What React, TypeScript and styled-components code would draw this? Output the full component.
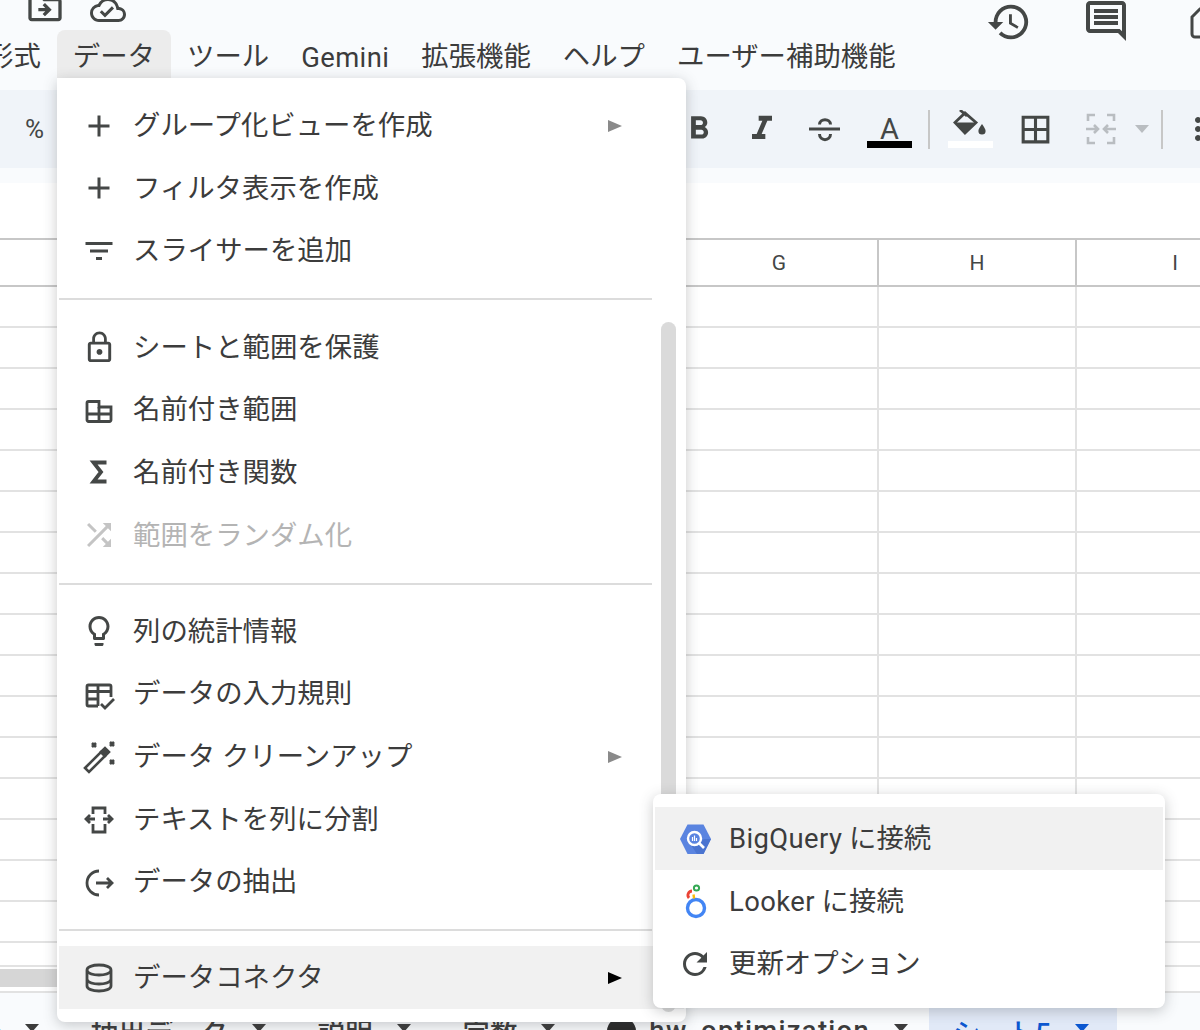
import React from "react"
import styled, { createGlobalStyle } from "styled-components"
import {
  MdAdd,
  MdBorderAll,
  MdFilterList,
  MdFormatBold,
  MdFormatItalic,
  MdHistory,
  MdLockOutline,
  MdMoreVert,
  MdOutlineCloudDone,
  MdOutlineComment,
  MdOutlineDriveFileMove,
  MdOutlineLightbulb,
  MdRefresh,
  MdShuffle,
} from "react-icons/md"

const GlobalStyle = createGlobalStyle`
  html, body {
    margin: 0;
    background: #ffffff;
  }
  * {
    box-sizing: border-box;
  }
`

const Page = styled.div`
  position: relative;
  width: 1200px;
  height: 1030px;
  overflow: hidden;
  background: #f9fbfd;
  color: #3c3c3c;
  font-family: Roboto, "Noto Sans CJK JP", sans-serif;
  font-size: 27.4px;
`

const Header = styled.header`
  display: flex;
  justify-content: space-between;
  height: 90px;
`
const HeaderLeft = styled.div`
  display: flex;
  flex-direction: column;
`
const IconRow = styled.div`
  display: flex;
  align-items: flex-end;
  gap: 25px;
  height: 30px;
  padding: 0 0 2px 25px;
  color: #444746;
`
const Actions = styled.div`
  display: flex;
  align-items: flex-start;
  gap: 50px;
  margin-right: -30px;
  color: #444746;
`
const ActionIcon = styled.span<{ $top: number; $left?: number }>`
  display: flex;
  margin-top: ${(p) => p.$top}px;
  margin-left: ${(p) => p.$left ?? 0}px;
`
const MenuBar = styled.nav`
  display: flex;
  height: 48px;
  margin-left: -30px;
`
const MenuTab = styled.div<{ $open?: boolean }>`
  display: flex;
  align-items: center;
  padding: 0 16px;
  white-space: nowrap;
  border-radius: 8px 8px 0 0;
  background: ${(p) => (p.$open ? "#ececec" : "transparent")};
`
const Latin = styled.span`
  letter-spacing: 0.4px;
`
const TabLatin = styled.span`
  letter-spacing: 1.3px;
`
const GeminiLabel = styled(Latin)`
  margin-top: 8px;
`

const Toolbar = styled.div`
  display: flex;
  align-items: center;
  justify-content: space-between;
  height: 78px;
  background: #f0f4f9;
  color: #444746;
`
const Percent = styled.span`
  padding-left: 25px;
  font-size: 26px;
`
const ToolGroup = styled.div`
  display: flex;
  align-items: center;
  margin-right: -33px;
`
const ToolButton = styled.span<{ $w: number }>`
  display: flex;
  justify-content: center;
  align-items: center;
  width: ${(p) => p.$w}px;
  height: 44px;
`
const ColorTool = styled.span<{ $w: number }>`
  display: flex;
  flex-direction: column;
  align-items: center;
  justify-content: flex-end;
  width: ${(p) => p.$w}px;
  height: 44px;
  padding-bottom: 3px;
`
const ColorGlyph = styled.span`
  display: flex;
  justify-content: center;
  align-items: flex-end;
  height: 30px;
`
const ColorLetter = styled.span`
  display: block;
  height: 30px;
  font-size: 29px;
  line-height: 38px;
`
const ColorBar = styled.span<{ $color: string }>`
  display: block;
  width: 45px;
  height: 7px;
  margin-top: 1px;
  background: ${(p) => p.$color};
`
const ToolDivider = styled.span<{ $left: number; $right: number }>`
  display: block;
  width: 2px;
  height: 39px;
  margin: 0 ${(p) => p.$right}px 0 ${(p) => p.$left}px;
  background: #c7c7c7;
`
const Caret = styled.span<{ $color: string }>`
  display: block;
  width: 0;
  height: 0;
  border-left: 7.5px solid transparent;
  border-right: 7.5px solid transparent;
  border-top: 8px solid ${(p) => p.$color};
`
const TabCaret = styled(Caret)`
  margin-top: -6px;
`
const CaretSlot = styled.span`
  display: flex;
  justify-content: center;
  width: 18px;
`
const FormulaGap = styled.div`
  height: 15px;
`

const Sheet = styled.section`
  background: #ffffff;
  padding-top: 55px;
`
const ColumnHeaders = styled.div`
  display: grid;
  grid-template-columns: 681px 198px 198px 198px;
  height: 49px;
  border-top: 2px solid #c7c7c7;
  border-bottom: 2px solid #c7c7c7;
`
const ColumnHeader = styled.div`
  display: flex;
  align-items: center;
  justify-content: center;
  border-right: 2px solid #c7c7c7;
  font-size: 21px;
  color: #444746;
`
const Row = styled.div<{ $h: number }>`
  display: grid;
  grid-template-columns: 681px 198px 198px 198px;
  height: ${(p) => p.$h}px;
  border-bottom: 2px solid #e2e2e2;
`
const Cell = styled.div`
  border-right: 2px solid #e2e2e2;
`
const Filler = styled.div``
const ScrollBand = styled.div`
  height: 26px;
  padding-top: 2px;
  border-bottom: 2px solid #e2e2e2;
`
const ScrollThumb = styled.div`
  width: 300px;
  height: 18px;
  background: #d6d6d6;
`

const TabBar = styled.div`
  display: flex;
  height: 37px;
  margin-left: -78px;
  font-weight: 500;
`
const SheetTab = styled.div<{ $active?: boolean; $right?: number }>`
  display: flex;
  flex: none;
  align-items: center;
  gap: 24px;
  height: 76px;
  padding: 0 ${(p) => p.$right ?? 28}px 0 24px;
  white-space: nowrap;
  color: ${(p) => (p.$active ? "#0b57d0" : "#3c3c3c")};
  background: ${(p) => (p.$active ? "#e1e9f7" : "transparent")};
`
const TabName = styled.span`
  display: flex;
  align-items: center;
  gap: 13px;
`
const TabDot = styled.span`
  display: block;
  width: 29px;
  height: 29px;
  border-radius: 50%;
  background: #2a2a2a;
`

const Menu = styled.div`
  position: absolute;
  left: 57px;
  top: 78px;
  width: 629px;
  height: 944px;
  padding-top: 16px;
  background: #ffffff;
  border-radius: 0 8px 8px 8px;
  box-shadow: 0 3px 14px rgba(60, 64, 67, 0.28);
`
const SubMenu = styled.div`
  position: absolute;
  left: 653px;
  top: 794px;
  width: 512px;
  height: 214px;
  padding-top: 13px;
  background: #ffffff;
  border-radius: 8px;
  box-shadow: 0 3px 14px rgba(60, 64, 67, 0.28);
`
const Item = styled.div<{ $active?: boolean; $disabled?: boolean }>`
  display: flex;
  align-items: center;
  gap: 16px;
  height: 62.6px;
  margin: 0 2px;
  padding: 0 62px 0 22px;
  white-space: nowrap;
  color: ${(p) => (p.$disabled ? "#b4b4b4" : "#3c3c3c")};
  background: ${(p) => (p.$active ? "#f1f1f1" : "transparent")};
`
const ItemIcon = styled.span<{ $disabled?: boolean }>`
  display: flex;
  flex: none;
  align-items: center;
  justify-content: center;
  width: 36px;
  height: 36px;
  margin-top: 1px;
  color: ${(p) => (p.$disabled ? "#c4c4c4" : "#444746")};
`
const ItemLabel = styled.span`
  flex: 1;
  padding-bottom: 4px;
`
const SubArrow = styled.span<{ $dark?: boolean }>`
  display: block;
  width: 0;
  height: 0;
  margin-top: 1px;
  border-top: 6.5px solid transparent;
  border-bottom: 6.5px solid transparent;
  border-left: 14px solid ${(p) => (p.$dark ? "#000000" : "#8a8a8a")};
`
const MenuDivider = styled.div`
  width: 593px;
  height: 2px;
  margin: 16.7px 0 15px 2px;
  background: #dcdcdc;
`
const MenuScrollThumb = styled.div`
  position: absolute;
  left: 604px;
  top: 244px;
  width: 15px;
  height: 690px;
  border-radius: 8px;
  background: #dadada;
`

const stroke = {
  fill: "none",
  stroke: "currentColor",
  strokeWidth: 2.8,
} as const

const RangeIcon = () => (
  <svg width="36" height="36" viewBox="0 0 36 36" {...stroke}>
    <path d="M7.5 9.5H18v5.5h12v13a1.5 1.5 0 0 1-1.5 1.5h-21A1.5 1.5 0 0 1 6 28V11a1.5 1.5 0 0 1 1.5-1.5z" />
    <path d="M6 22h24M18 15v14.5" />
  </svg>
)
const SigmaIcon = () => (
  <svg width="36" height="36" viewBox="0 0 36 36" fill="none" stroke="currentColor" strokeWidth="3.8">
    <path d="M25.5 8.5H12.5L20 18l-7.5 9.5h13" />
  </svg>
)
const ValidationIcon = () => (
  <svg width="36" height="36" viewBox="0 0 36 36" {...stroke}>
    <path d="M17 30H7.5A1.5 1.5 0 0 1 6 28.5v-18A1.5 1.5 0 0 1 7.5 9h21a1.5 1.5 0 0 1 1.5 1.5V21" />
    <path d="M6 15.5h24M6 23h12M17 9v21" />
    <path d="M20 28l4 4 9-9" />
  </svg>
)
const WandIcon = () => (
  <svg width="36" height="36" viewBox="0 0 36 36" fill="none" stroke="currentColor" strokeWidth="2.6">
    <path d="M4 29l16-16 4 4L8 33z" />
    <path d="M20 13l4-4 4 4-4 4z" fill="currentColor" />
    <path d="M11 4l4 4M15 4l-4 4M29 3l4 4M33 3l-4 4M29 21l4 4M33 21l-4 4" />
  </svg>
)
const SplitIcon = () => (
  <svg width="36" height="36" viewBox="0 0 36 36" {...stroke}>
    <path d="M12 13V7h12v6M12 23v8h12v-8" />
    <path d="M14 18H5m4-4l-4 4 4 4M22 18h9m-4-4l4 4-4 4" />
  </svg>
)
const ExtractIcon = () => (
  <svg width="36" height="36" viewBox="0 0 36 36" {...stroke}>
    <path d="M18 7a12 12 0 0 0 0 24" />
    <path d="M15 19h16m-5-5l5 5-5 5" />
  </svg>
)
const DatabaseIcon = () => (
  <svg width="36" height="36" viewBox="0 0 36 36" {...stroke}>
    <path d="M6 10c0-3 5.5-5 12-5s12 2 12 5v16c0 3-5.5 5-12 5s-12-2-12-5z" />
    <path d="M6 11c2 3 7 4 12 4s10-1 12-4M6 20c2 3 7 4 12 4s10-1 12-4" />
  </svg>
)
const BigQueryIcon = () => (
  <svg width="36" height="36" viewBox="0 0 36 36">
    <polygon points="3,18 10.5,3.5 26.5,3.5 34,18 26.5,33 10.5,33" fill="#5a84e0" />
    <polygon points="22,22 27,18 34,18 26.5,33 20,33 14,24" fill="#4a74d0" />
    <circle cx="17.5" cy="17.5" r="6.5" fill="none" stroke="#ffffff" strokeWidth="2.4" />
    <path d="M22 22l5 5" stroke="#ffffff" strokeWidth="2.6" />
    <path d="M15.5 16v4M17.5 14.5v5.5M19.5 17v3" stroke="#ffffff" strokeWidth="1.2" />
  </svg>
)
const LookerIcon = () => (
  <svg width="36" height="36" viewBox="0 0 36 36" fill="none">
    <circle cx="19" cy="25" r="8.5" stroke="#4285f4" strokeWidth="3.4" />
    <path d="M15 8a4.2 4.2 0 0 0-3 7" stroke="#ea4335" strokeWidth="2.8" />
    <circle cx="19.5" cy="5" r="2.6" stroke="#34a853" strokeWidth="2" />
    <path d="M16.5 11.5l.6 4" stroke="#fbbc04" strokeWidth="2.4" />
  </svg>
)
const StrikeIcon = () => (
  <svg width="36" height="36" viewBox="0 0 36 36" fill="none" stroke="currentColor" strokeWidth="3">
    <path d="M2 18h31" />
    <path d="M12.5 13.5c0-6.5 11-6.5 11 0M12.5 23c0 7.5 11 7.5 11 0" />
  </svg>
)
const FillIcon = () => (
  <svg width="36" height="30" viewBox="0 0 36 30" fill="none" stroke="currentColor" strokeWidth="2.8">
    <path d="M8 0l7 6" />
    <path d="M3 12.5l10-9.5 11 9.5-11 10.5z" />
    <path d="M3 12.5h21l-11 10.5z" fill="currentColor" stroke="none" />
    <path d="M30 14c-2 3-3.6 5-3.6 7a3.6 3.6 0 0 0 7.2 0c0-2-1.6-4-3.6-7z" fill="currentColor" stroke="none" />
  </svg>
)
const MergeIcon = () => (
  <svg width="36" height="36" viewBox="0 0 36 36" fill="none" stroke="#b9bdc1" strokeWidth="2.6">
    <path d="M5 10V4h7M5 26v6h7M31 10V4h-7M31 26v6h-7" />
    <path d="M3 18h12m-4-4l4 4-4 4M33 18H21m4-4l-4 4 4 4" />
  </svg>
)
const MeetIcon = () => (
  <svg width="40" height="36" viewBox="0 0 40 36" fill="none" stroke="#444746" strokeWidth="3">
    <path d="M2 12l8-8h26v28H5a3 3 0 0 1-3-3z" />
  </svg>
)

interface MenuEntry {
  label: React.ReactNode
  icon: React.ReactNode
  sub?: boolean
  disabled?: boolean
  active?: boolean
}

const sections: MenuEntry[][] = [
  [
    { label: "グループ化ビューを作成", icon: <MdAdd size={36} />, sub: true },
    { label: "フィルタ表示を作成", icon: <MdAdd size={36} /> },
    { label: "スライサーを追加", icon: <MdFilterList size={36} /> },
  ],
  [
    { label: "シートと範囲を保護", icon: <MdLockOutline size={35} /> },
    { label: "名前付き範囲", icon: <RangeIcon /> },
    { label: "名前付き関数", icon: <SigmaIcon /> },
    { label: "範囲をランダム化", icon: <MdShuffle size={36} />, disabled: true },
  ],
  [
    { label: "列の統計情報", icon: <MdOutlineLightbulb size={36} /> },
    { label: "データの入力規則", icon: <ValidationIcon /> },
    { label: "データ クリーンアップ", icon: <WandIcon />, sub: true },
    { label: "テキストを列に分割", icon: <SplitIcon /> },
    { label: "データの抽出", icon: <ExtractIcon /> },
  ],
  [{ label: "データコネクタ", icon: <DatabaseIcon />, sub: true, active: true }],
]

const connectors: MenuEntry[] = [
  { label: <><Latin>BigQuery</Latin> に接続</>, icon: <BigQueryIcon />, active: true },
  { label: <><Latin>Looker</Latin> に接続</>, icon: <LookerIcon /> },
  { label: "更新オプション", icon: <MdRefresh size={36} /> },
]

const menuNames = ["形式", "データ", "ツール", "Gemini", "拡張機能", "ヘルプ", "ユーザー補助機能"]
const rowHeights = [...Array(16).fill(41), 24]

const MenuRow = ({ entry }: { entry: MenuEntry }) => (
  <Item $active={entry.active} $disabled={entry.disabled}>
    <ItemIcon $disabled={entry.disabled}>{entry.icon}</ItemIcon>
    <ItemLabel>{entry.label}</ItemLabel>
    {entry.sub && <SubArrow $dark={entry.active} />}
  </Item>
)

export default function App() {
  return (
    <Page>
      <GlobalStyle />
      <Header>
        <HeaderLeft>
          <IconRow>
            <MdOutlineDriveFileMove size={40} />
            <MdOutlineCloudDone size={36} />
          </IconRow>
          <MenuBar>
            {menuNames.map((name) => (
              <MenuTab key={name} $open={name === "データ"}>
                {name === "Gemini" ? <GeminiLabel>{name}</GeminiLabel> : name}
              </MenuTab>
            ))}
          </MenuBar>
        </HeaderLeft>
        <Actions>
          <ActionIcon $top={-1}>
            <MdHistory size={46} />
          </ActionIcon>
          <ActionIcon $top={-3}>
            <MdOutlineComment size={48} />
          </ActionIcon>
          <ActionIcon $top={5} $left={10}>
            <MeetIcon />
          </ActionIcon>
        </Actions>
      </Header>

      <Toolbar>
        <Percent>%</Percent>
        <ToolGroup>
          <ToolButton $w={63}>
            <MdFormatBold size={38} />
          </ToolButton>
          <ToolButton $w={63}>
            <MdFormatItalic size={40} />
          </ToolButton>
          <ToolButton $w={63}>
            <StrikeIcon />
          </ToolButton>
          <ColorTool $w={67}>
            <ColorGlyph>
              <ColorLetter>A</ColorLetter>
            </ColorGlyph>
            <ColorBar $color="#000000" />
          </ColorTool>
          <ToolDivider $left={5} $right={7} />
          <ColorTool $w={66}>
            <ColorGlyph>
              <FillIcon />
            </ColorGlyph>
            <ColorBar $color="#ffffff" />
          </ColorTool>
          <ToolButton $w={65}>
            <MdBorderAll size={37} />
          </ToolButton>
          <ToolButton $w={65}>
            <MergeIcon />
          </ToolButton>
          <CaretSlot>
            <Caret $color="#b9bdc1" />
          </CaretSlot>
          <ToolDivider $left={10} $right={0} />
          <ToolButton $w={70}>
            <MdMoreVert size={36} />
          </ToolButton>
        </ToolGroup>
      </Toolbar>
      <FormulaGap />

      <Sheet>
        <ColumnHeaders>
          <Filler />
          <ColumnHeader>G</ColumnHeader>
          <ColumnHeader>H</ColumnHeader>
          <ColumnHeader>I</ColumnHeader>
        </ColumnHeaders>
        {rowHeights.map((h, i) => (
          <Row key={i} $h={h}>
            <Filler />
            <Cell />
            <Cell />
            <Cell />
          </Row>
        ))}
        <ScrollBand>
          <ScrollThumb />
        </ScrollBand>
      </Sheet>

      <TabBar>
        <SheetTab>
          <TabName>分析</TabName>
          <TabCaret $color="#3c3c3c" />
        </SheetTab>
        <SheetTab>
          <TabName>抽出データ</TabName>
          <TabCaret $color="#3c3c3c" />
        </SheetTab>
        <SheetTab>
          <TabName>説明</TabName>
          <TabCaret $color="#3c3c3c" />
        </SheetTab>
        <SheetTab>
          <TabName>定数</TabName>
          <TabCaret $color="#3c3c3c" />
        </SheetTab>
        <SheetTab $right={21}>
          <TabName>
            <TabDot />
            <TabLatin>hw_optimization</TabLatin>
          </TabName>
          <TabCaret $color="#3c3c3c" />
        </SheetTab>
        <SheetTab $active>
          <TabName>シート5</TabName>
          <TabCaret $color="#0b57d0" />
        </SheetTab>
      </TabBar>

      <Menu>
        {sections.map((section, i) => (
          <React.Fragment key={i}>
            {i > 0 && <MenuDivider />}
            {section.map((entry, j) => (
              <MenuRow key={j} entry={entry} />
            ))}
          </React.Fragment>
        ))}
        <MenuScrollThumb />
      </Menu>
      <SubMenu>
        {connectors.map((entry, i) => (
          <MenuRow key={i} entry={entry} />
        ))}
      </SubMenu>
    </Page>
  )
}
